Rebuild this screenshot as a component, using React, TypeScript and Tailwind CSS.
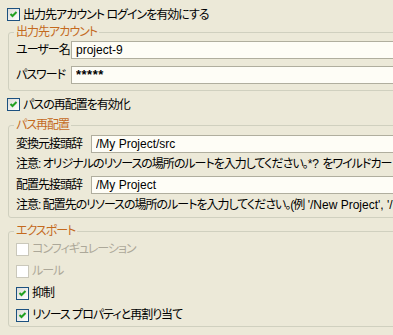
import React from "react";

interface BoxProps {
  checked?: boolean;
  disabled?: boolean;
}

const CheckBox = ({ checked, disabled }: BoxProps) => (
  <span
    className={
      disabled
        ? "flex h-[13px] w-[13px] shrink-0 items-center justify-center border border-[#CAC8BB] bg-white"
        : "flex h-[13px] w-[13px] shrink-0 items-center justify-center border border-[#1C5180] bg-linear-to-br from-[#DCDCD7] to-white"
    }
  >
    {checked && (
      <svg width="11" height="11" viewBox="0 0 11 11">
        <path d="M2.5 5 L4.5 7 L8.5 3" fill="none" stroke="#21A121" strokeWidth="2" />
      </svg>
    )}
  </span>
);

const CheckRow = ({
  label,
  checked,
  disabled,
  className,
}: BoxProps & { label: string; className: string }) => (
  <div className={`flex items-center gap-[3px] ${className}`}>
    <CheckBox checked={checked} disabled={disabled} />
    <span className={disabled ? "whitespace-nowrap text-[#ACA899]" : "whitespace-nowrap"}>{label}</span>
  </div>
);

const Field = ({ value, password }: { value: string; password?: boolean }) => (
  <input
    readOnly
    value={value}
    className={
      password
        ? "h-[18px] flex-1 border border-[#B0AE9E] bg-[#FEFDF6] pl-[4px] text-[13px] font-bold tracking-[0.5px] outline-none"
        : "h-[18px] flex-1 border border-[#B0AE9E] bg-[#FEFDF6] pl-[4px] text-[12px] tracking-normal outline-none"
    }
  />
);

const Legend = ({ text }: { text: string }) => (
  <legend className="px-[2px] leading-[14px] text-[#C46A1E]">{text}</legend>
);

const App = () => {
  return (
    <div className="h-[335px] w-[393px] overflow-hidden bg-[#ECE9D8] font-['Liberation_Sans','Noto_Sans_CJK_JP',sans-serif] text-[12px] tracking-[-1px] text-black [font-feature-settings:'palt']">
      <div className="w-[560px] pl-[7px] pt-[7px]">
        <CheckRow className="h-[15px]" checked label="出力先アカウント ログインを有効にする" />

        <fieldset className="ml-[1px] mt-[3px] rounded-[3px] border border-[#D0D0BF] pl-[5px]">
          <Legend text="出力先アカウント" />
          <div className="flex flex-col gap-[7px] pb-[6px] pl-[2px] pt-[2px]">
            <div className="flex items-center">
              <span className="w-[55px] whitespace-nowrap">ユーザー名</span>
              <Field value="project-9" />
            </div>
            <div className="flex items-center">
              <span className="w-[55px] whitespace-nowrap">パスワード</span>
              <Field value="*****" password />
            </div>
          </div>
        </fieldset>

        <CheckRow className="mt-[6px] h-[15px]" checked label="パスの再配置を有効化" />

        <fieldset className="ml-[1px] mt-[6px] rounded-[3px] border border-[#D0D0BF] pl-[5px]">
          <Legend text="パス再配置" />
          <div className="flex flex-col pl-[2px] pt-[3px]">
            <div className="flex items-center">
              <span className="w-[75px] whitespace-nowrap">変換元接頭辞</span>
              <Field value="/My Project/src" />
            </div>
            <p className="h-[23px] whitespace-nowrap leading-[23px]">
              注意: オリジナルのリソースの場所のルートを入力してください。
              <span className="tracking-normal">*? </span>
              をワイルドカードとして使用できます。
            </p>
            <div className="flex items-center">
              <span className="w-[75px] whitespace-nowrap">配置先接頭辞</span>
              <Field value="/My Project" />
            </div>
            <p className="h-[23px] whitespace-nowrap leading-[23px]">
              注意: 配置先のリソースの場所のルートを入力してください。(例
              <span className="tracking-normal"> '/New Project', '/New Project/src')</span>
            </p>
          </div>
        </fieldset>

        <fieldset className="ml-[1px] mt-[6px] rounded-[3px] border border-[#D0D0BF] pl-[5px]">
          <Legend text="エクスポート" />
          <div className="flex flex-col pl-[2px]">
            <CheckRow className="h-[22px]" disabled label="コンフィギュレーション" />
            <CheckRow className="h-[22px]" disabled label="ルール" />
            <CheckRow className="h-[22px]" checked label="抑制" />
            <CheckRow className="h-[22px]" checked label="リソース プロパティと再割り当て" />
          </div>
        </fieldset>
      </div>
    </div>
  );
};

export default App;
